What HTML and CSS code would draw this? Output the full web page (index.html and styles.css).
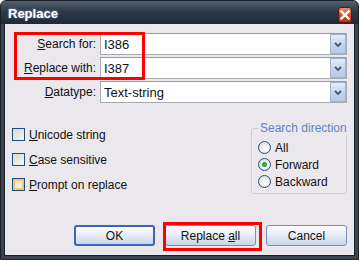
FILE: index.html
```html
<!DOCTYPE html>
<html lang="en">
<head>
    <meta charset="UTF-8">
    <title>Replace</title>
    <link rel="stylesheet" href="styles.css">
</head>
<body>
    <div class="window">
        <!-- Title bar -->
        <div class="titlebar">
            <span class="title">Replace</span>
            <span class="close">
                <svg width="10" height="10" viewBox="0 0 10 10"><path d="M1.5 1.5 L8.5 8.5 M8.5 1.5 L1.5 8.5" stroke="#fff" stroke-width="2.4" stroke-linecap="square"/></svg>
            </span>
        </div>

        <div class="content">
            <!-- Search / replace fields -->
            <div class="fields">
                <label class="label"><u>S</u>earch for:</label>
                <div class="combo">
                    <span class="value">I386</span>
                    <span class="drop"><svg width="8" height="5" viewBox="0 0 8 5"><path d="M1 1 L4 4 L7 1" fill="none" stroke="#4a5566" stroke-width="1.8"/></svg></span>
                </div>
                <label class="label"><u>R</u>eplace with:</label>
                <div class="combo">
                    <span class="value">I387</span>
                    <span class="drop"><svg width="8" height="5" viewBox="0 0 8 5"><path d="M1 1 L4 4 L7 1" fill="none" stroke="#4a5566" stroke-width="1.8"/></svg></span>
                </div>
                <label class="label"><u>D</u>atatype:</label>
                <div class="combo">
                    <span class="value">Text-string</span>
                    <span class="drop"><svg width="8" height="5" viewBox="0 0 8 5"><path d="M1 1 L4 4 L7 1" fill="none" stroke="#4a5566" stroke-width="1.8"/></svg></span>
                </div>
            </div>

            <!-- Options -->
            <div class="options">
                <div class="checks">
                    <div class="check"><span class="box"></span><span><u>U</u>nicode string</span></div>
                    <div class="check"><span class="box"></span><span><u>C</u>ase sensitive</span></div>
                    <div class="check"><span class="box hot"></span><span><u>P</u>rompt on replace</span></div>
                </div>
                <fieldset class="direction">
                    <legend>Search direction</legend>
                    <div class="radio"><span class="dot"></span>All</div>
                    <div class="radio"><span class="dot checked"></span>Forward</div>
                    <div class="radio"><span class="dot"></span>Backward</div>
                </fieldset>
            </div>

            <!-- Buttons -->
            <div class="buttons">
                <button class="btn btn-default">OK</button>
                <button class="btn btn-wide">Replace <u>a</u>ll</button>
                <button class="btn">Cancel</button>
            </div>

            <!-- Red annotation marks -->
            <div class="mark mark-fields"></div>
            <div class="mark mark-replace"></div>
        </div>
    </div>
</body>
</html>
```

FILE: styles.css
```css
body, html {
    margin: 0;
    padding: 0;
    background: #fff;
    font-family: 'Liberation Sans', Arial, sans-serif;
    font-size: 12px;
}

.window {
    width: 359px;
    height: 260px;
    box-sizing: border-box;
    display: flex;
    flex-direction: column;
    background: #3b4451;
    border: 1px solid #1b2028;
    border-radius: 6px 6px 0 0;
    overflow: hidden;
}

.titlebar {
    height: 23px;
    flex: none;
    display: flex;
    align-items: center;
    justify-content: space-between;
    padding: 0 6px 0 7px;
    background: linear-gradient(#56616f, #2f3a48 45%, #1f2935);
}

.title {
    color: #fff;
    font-weight: bold;
    font-size: 13px;
    text-shadow: 0 0 2px #8aa0d0;
    margin-top: 2px;
}

.close {
    width: 14px;
    height: 16px;
    box-sizing: border-box;
    display: flex;
    align-items: center;
    justify-content: center;
    margin-top: 4px;
    border: 1px solid #5a1a10;
    border-radius: 3px;
    background: linear-gradient(#f08a6c, #d84a2c 50%, #b8301a);
}

.content {
    position: relative;
    flex: 1;
    margin: 0 3px 3px 3px;
    border: 1px solid #1a2029;
    border-top: none;
    background: #ebe8ed;
    display: flex;
    flex-direction: column;
    padding: 9px 7px 9px 7px;
}

.fields {
    display: grid;
    grid-template-columns: 84px 1fr;
    grid-auto-rows: 22px;
    column-gap: 4px;
    row-gap: 2px;
}

.label {
    display: flex;
    align-items: center;
    justify-content: flex-end;
    color: #111;
}

.combo {
    display: flex;
    align-items: stretch;
    justify-content: space-between;
    background: #fff;
    border: 1px solid #a7abb0;
    border-top-color: #999ca1;
}

.value {
    display: flex;
    align-items: center;
    padding-left: 3px;
    font-size: 13px;
    color: #111;
}

.drop {
    width: 16px;
    box-sizing: border-box;
    display: flex;
    align-items: center;
    justify-content: center;
    border: 1px solid #9fb2cf;
    background: linear-gradient(#e6eef9, #c5d6ee 50%, #b5cae8);
}

.options {
    display: flex;
    justify-content: space-between;
    align-items: flex-start;
    margin-top: 18px;
}

.checks {
    display: flex;
    flex-direction: column;
    padding-top: 1px;
}

.check {
    height: 25px;
    display: flex;
    align-items: center;
    gap: 4px;
    color: #111;
}

.box {
    width: 13px;
    height: 13px;
    box-sizing: border-box;
    border: 1px solid #1c4f80;
    background: linear-gradient(135deg, #d9d8d2, #f6f6f3);
}

.box.hot {
    box-shadow: inset 0 0 0 2px #f8c46a;
    background: linear-gradient(135deg, #e0ddd6, #fbf6ea);
}

.direction {
    width: 96px;
    min-width: 0;
    box-sizing: border-box;
    margin: 0;
    padding: 4px 0 3px 6px;
    border: 1px solid #cfcdd2;
    border-radius: 3px;
}

.direction legend {
    padding: 0 1px 0 2px;
    color: #6482c8;
    font-size: 12px;
    white-space: nowrap;
}

.radio {
    height: 17px;
    display: flex;
    align-items: center;
    gap: 4px;
    color: #111;
}

.dot {
    width: 13px;
    height: 13px;
    box-sizing: border-box;
    border-radius: 50%;
    border: 1px solid #1c4f80;
    background: radial-gradient(circle at 60% 60%, #fff, #d7d6d0);
    display: flex;
    align-items: center;
    justify-content: center;
}

.dot.checked::after {
    content: '';
    width: 5px;
    height: 5px;
    border-radius: 50%;
    background: #2ea636;
}

.buttons {
    margin-top: auto;
    display: flex;
    justify-content: flex-end;
    gap: 10px;
}

.btn {
    width: 81px;
    height: 21px;
    padding: 0;
    font-family: inherit;
    font-size: 12px;
    color: #111;
    border: 1px solid #7a8fb4;
    border-radius: 3px;
    background: linear-gradient(#fbfcfe, #eaeff7 45%, #c8d4e8);
}

.btn-default {
    border: 2px solid #3a64b8;
}

.btn-wide {
    width: 91px;
}

.mark {
    position: absolute;
    box-sizing: border-box;
    border: 3px solid #f00;
}

.mark-fields {
    left: 9px;
    top: 8px;
    width: 131px;
    height: 48px;
}

.mark-replace {
    left: 158px;
    top: 198px;
    width: 99px;
    height: 29px;
}
```
